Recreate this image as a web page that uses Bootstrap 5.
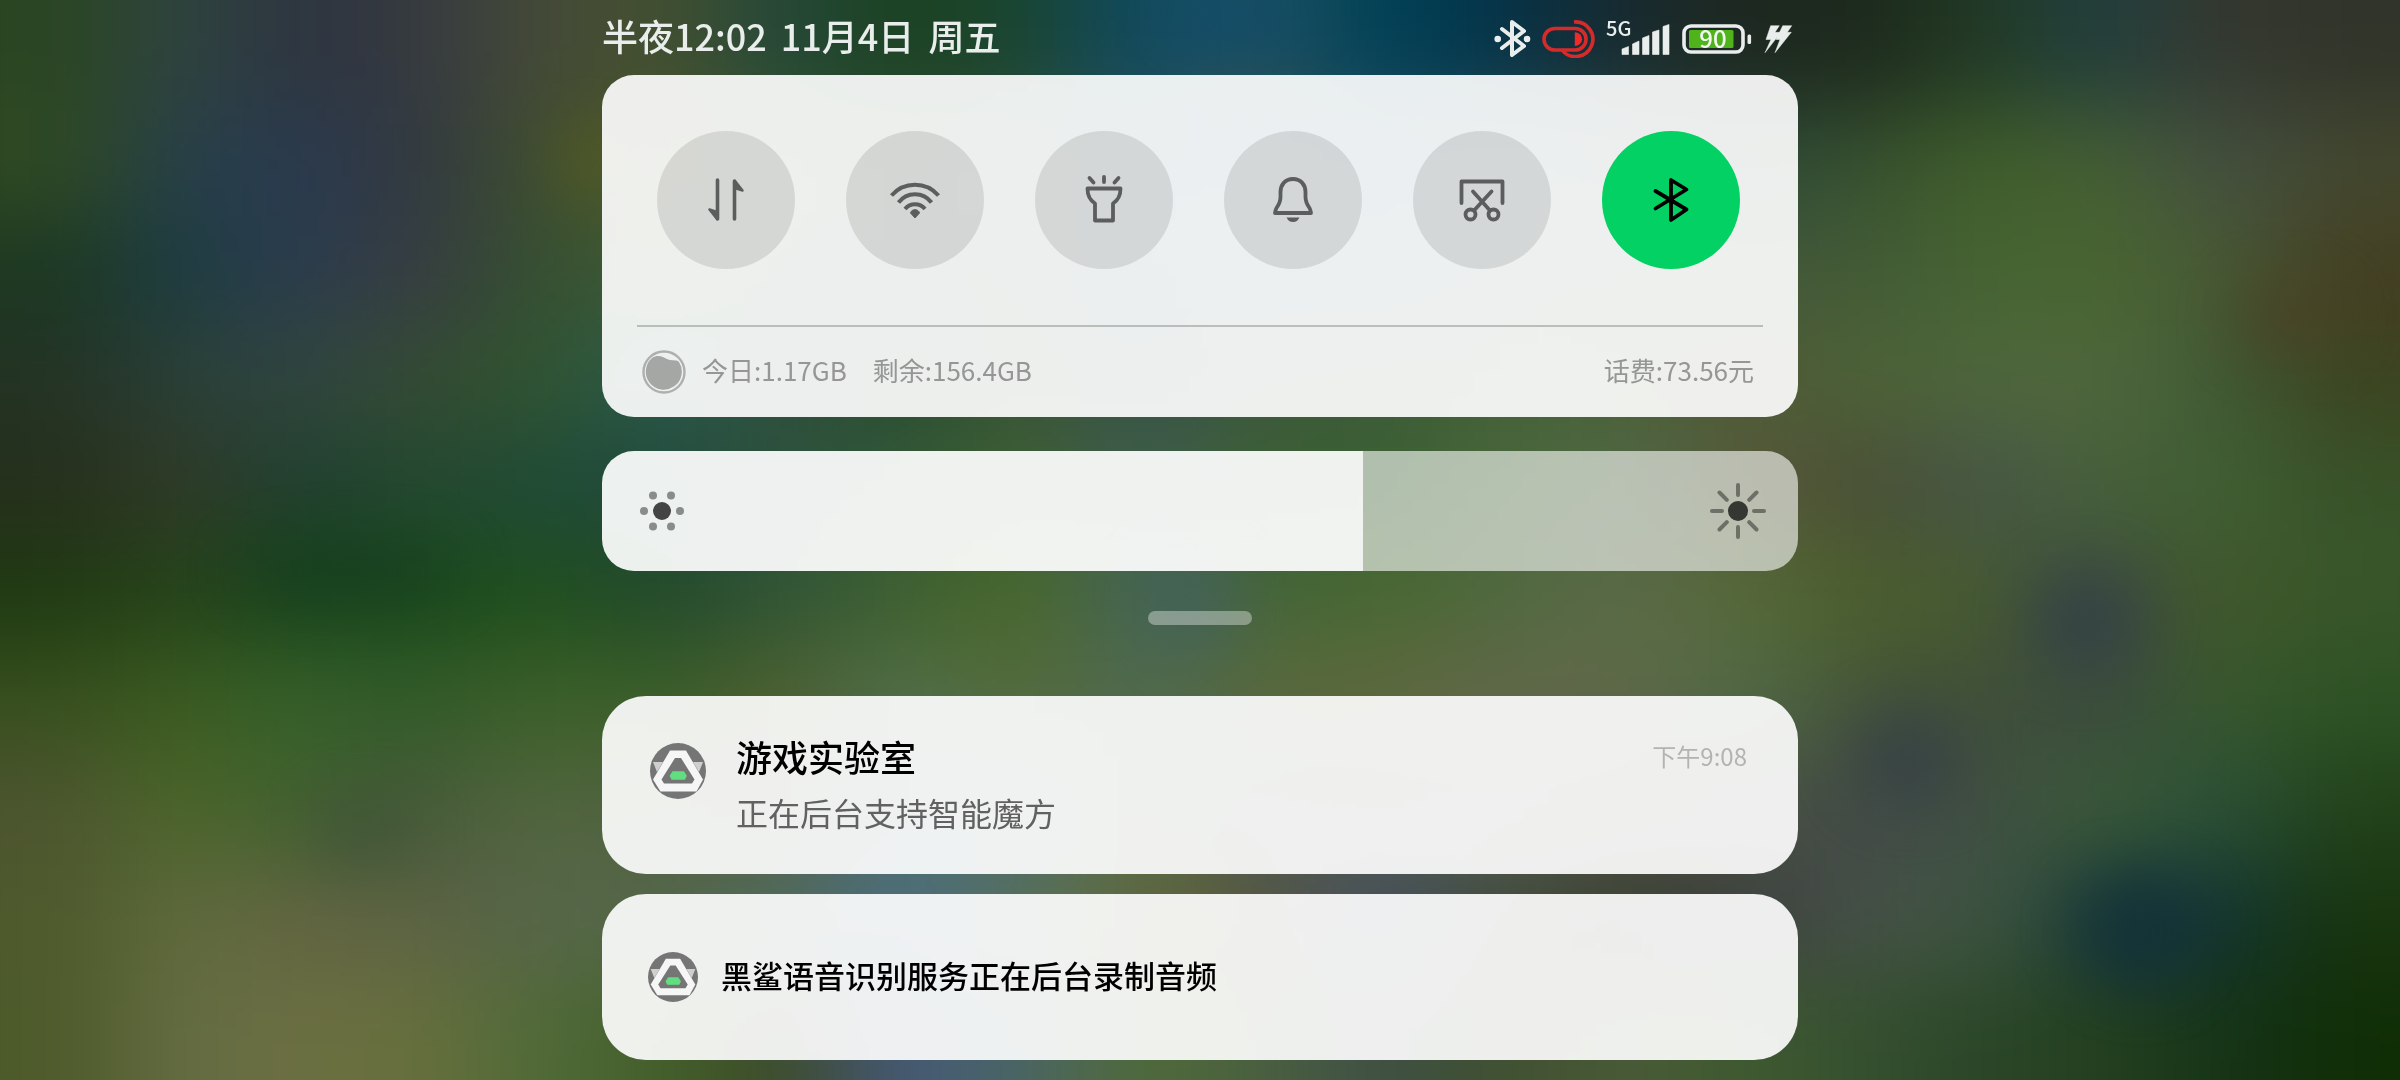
<!DOCTYPE html>
<html lang="zh-CN">
<head>
<meta charset="utf-8">
<meta name="viewport" content="width=device-width, initial-scale=1">
<title>通知中心</title>
<link href="https://cdn.jsdelivr.net/npm/bootstrap@5.3.0/dist/css/bootstrap.min.css" rel="stylesheet">
<style>
  body { font-family: "Noto Sans CJK SC", "Noto Sans", sans-serif; background: #35502f; color: #000; min-height: 100vh; }
  .wallpaper { position: fixed; inset: 0; width: 100%; height: 100%; z-index: -1; }
  .shade { max-width: 1196px; }
  .statusbar { height: 75px; color: #e9eeec; font-size: 36px; font-weight: 500; line-height: 48px; padding-right: 4px; }
  .status-gap { gap: 14px; padding-bottom: 6px; }
  .icon-gap { gap: 10px; }
  .panel { background: rgba(255, 255, 255, .91); border-radius: 32px; }
  .toggles { padding: 56px 58px 56px 55px; }
  .toggle { width: 138px; height: 138px; background: rgba(0, 0, 0, .1); color: #5c5d5d; }
  .toggle:hover { background: rgba(0, 0, 0, .15); }
  .toggle.is-on { background: #04d163; color: #000; }
  .rule-line { height: 2px; margin: 0 35px; background: #bbbdbb; }
  .usage { height: 90px; padding: 0 44px 0 40px; font-size: 26px; color: #959695; line-height: 36px; }
  .usage > span, .usage-left span > span, .usage-left > span:last-child { padding-bottom: 4px; }
  .usage-left { gap: 26px; }
  .usage-ball { gap: 16px; }
  .brightness { margin-top: 34px; }
  .brightness input { appearance: none; -webkit-appearance: none; height: 120px; border-radius: 32px; cursor: pointer;
    background: linear-gradient(to right, rgba(255,255,255,.92) var(--level), rgba(255,255,255,.6) var(--level)); }
  .brightness input::-webkit-slider-thumb { -webkit-appearance: none; width: 2px; height: 120px; background: transparent; }
  .brightness input::-moz-range-thumb { width: 2px; height: 120px; border: 0; background: transparent; }
  .brightness svg { top: 30px; pointer-events: none; }
  .sun-low { left: 30px; }
  .sun-high { right: 30px; }
  .grabber { width: 104px; height: 14px; margin: 40px auto 71px; border-radius: 7px; background: rgba(255, 255, 255, .36); }
  .notices { gap: 20px; padding-bottom: 20px; }
  .notice { background: rgba(255, 255, 255, .91); border-radius: 44px; }
  .notice-tall { padding: 36px 51px 40px 48px; gap: 30px; }
  .notice-tall .app-logo { width: 56px; margin-top: 11px; }
  .notice-tall h2 { font-size: 36px; line-height: 48px; font-weight: 500; margin: 0; }
  .notice-tall p { font-size: 32px; line-height: 44px; margin: 10px 0 0; color: #606160; }
  .notice-tall time { font-size: 24px; line-height: 48px; color: #b2b4b2; }
  .notice-short { padding: 58px 46px; gap: 23px; }
  .notice-short .app-logo { width: 50px; }
  .notice-short p { font-size: 31px; line-height: 46px; font-weight: 500; margin: 0; padding-bottom: 4px; }
</style>
<script src="https://cdn.jsdelivr.net/npm/bootstrap@5.3.0/dist/js/bootstrap.bundle.min.js"></script>
</head>
<body>
<svg class="wallpaper" viewBox="0 0 2400 1080" preserveAspectRatio="none" aria-hidden="true">
  <defs>
    <filter id="soft" x="-10%" y="-10%" width="120%" height="120%" color-interpolation-filters="sRGB"><feGaussianBlur stdDeviation="56 46"/></filter>
    <filter id="softer" x="-80%" y="-80%" width="260%" height="260%" color-interpolation-filters="sRGB"><feGaussianBlur stdDeviation="30"/></filter>
  </defs>
  <g id="mesh" filter="url(#soft)"></g>
  <g filter="url(#softer)" opacity=".75">
    <ellipse cx="2086" cy="620" rx="54" ry="50" fill="#323e48"/>
    <ellipse cx="1908" cy="756" rx="54" ry="48" fill="#343f46"/>
    <ellipse cx="2140" cy="930" rx="60" ry="56" fill="#10303a"/>
    <ellipse cx="2290" cy="318" rx="56" ry="34" fill="#4a4225"/>
    <ellipse cx="590" cy="160" rx="24" ry="34" fill="#5c601c"/>
    <ellipse cx="1190" cy="600" rx="40" ry="50" fill="#44615c"/>
    <ellipse cx="365" cy="830" rx="50" ry="30" fill="#3d5238"/>
    <ellipse cx="350" cy="570" rx="110" ry="24" fill="#123c1e"/>
    <ellipse cx="1240" cy="14" rx="70" ry="22" fill="#0c4c74"/>
  </g>
</svg>

<main class="shade w-100 mx-auto">
  <header class="statusbar d-flex justify-content-between align-items-center">
    <div class="d-flex status-gap"><span>半夜12:02</span><span>11月4日</span><span>周五</span></div>
    <div class="d-flex icon-gap align-items-center">
      <svg width="38" height="40" viewBox="0 0 38 40" role="img" aria-label="蓝牙已连接">
        <path d="M8 11 30 28 18 37V4L30 13 8 30" fill="none" stroke="currentColor" stroke-width="4" stroke-linejoin="round" stroke-linecap="round"/>
        <circle cx="3.7" cy="21" r="3.3" fill="currentColor"/><circle cx="33" cy="21" r="3.3" fill="currentColor"/>
      </svg>
      <svg width="54" height="40" viewBox="0 0 54 40" role="img" aria-label="游戏模式" fill="none" stroke="#d62b2b" stroke-width="3.6">
        <rect x="2" y="10.5" width="42" height="21.5" rx="10.7"/>
        <path d="M32 4A17.3 17.3 0 1 1 20 32"/>
        <path d="M32.8 14.3A7.2 6.8 0 0 1 32.8 28Z" fill="#f02a2a" stroke="none"/>
      </svg>
      <svg width="64" height="60" viewBox="0 -10 64 60" role="img" aria-label="5G 信号" fill="currentColor">
        <text x="0" y="18" font-size="20" font-weight="500">5G</text>
        <path d="M16 31 22.500 28.500V36.500H16ZM26.500 26 33 23V36.500H26.500ZM36.500 20 43 17.500V36.500H36.500ZM46.500 14 53 12V36.500H46.500ZM57 8.500 63 6.500V36.500H57Z" stroke="currentColor" stroke-width=".6" stroke-linejoin="round"/>
      </svg>
      <svg width="72" height="40" viewBox="0 0 72 40" role="img" aria-label="电量 90">
        <rect x="4" y="8" width="59" height="26" rx="7" fill="none" stroke="currentColor" stroke-width="3.6"/>
        <rect x="9" y="12" width="44.500" height="18" rx="1.500" fill="#4fb31c"/>
        <rect x="67.500" y="16.500" width="3.600" height="9.500" rx="1.500" fill="currentColor"/>
        <text x="33" y="30" text-anchor="middle" font-size="24" font-weight="500" fill="#f4f8f2">90</text>
      </svg>
      <svg width="32" height="40" viewBox="0 0 32 40" role="img" aria-label="快速充电" fill="currentColor">
        <path d="M8.700 7.700H17.300L13 14.300H19L3 34.700 9 21.500H4ZM20.700 7.700H29.700L25.300 14.300H29.300L13 34.700 18 21.500H14Z" stroke="currentColor" stroke-width=".5"/>
      </svg>
    </div>
  </header>

  <section class="panel">
    <div class="toggles d-flex justify-content-between">
      <button type="button" class="toggle btn border-0 p-0 rounded-circle" aria-label="移动数据">
        <svg width="60" height="60" viewBox="0 0 60 60" fill="currentColor" stroke="currentColor" stroke-linecap="round" stroke-linejoin="round">
          <path d="M21.500 10V49M38.500 11V49" stroke-width="3.600"/><path d="M21 49 13.500 39.500 21 42ZM39 11 46.500 20.500 39 18Z" stroke-width="2.500"/></svg>
      </button>
      <button type="button" class="toggle btn border-0 p-0 rounded-circle" aria-label="无线网络">
        <svg width="60" height="60" viewBox="0 0 60 60" fill="none" stroke="currentColor" stroke-width="4">
          <path d="M6.500 25.500A31 31 0 0 1 53.500 25.500M13.500 32.500A20.500 20.500 0 0 1 46.500 32.500M20 39A13 13 0 0 1 40 39"/>
          <path d="M25.500 43C26.500 38.500 33.500 38.500 34.500 43L30 48Z" fill="currentColor" stroke-width="1" stroke-linejoin="round"/></svg>
      </button>
      <button type="button" class="toggle btn border-0 p-0 rounded-circle" aria-label="手电筒">
        <svg width="60" height="60" viewBox="0 0 60 60" fill="none" stroke="currentColor" stroke-width="3.800" stroke-linecap="round" stroke-linejoin="round">
          <path d="M13.500 18.500H46.500C46.500 27 43.500 30.500 39 33.500V50.500H21V33.500C16.500 30.500 13.500 27 13.500 18.500ZM30 7V12M15.500 8 19.500 12.500M44.500 8 40.500 12.500"/></svg>
      </button>
      <button type="button" class="toggle btn border-0 p-0 rounded-circle" aria-label="铃声">
        <svg width="60" height="60" viewBox="0 0 60 60" fill="none" stroke="currentColor" stroke-width="3.800" stroke-linejoin="round">
          <path d="M30 9C22 9 17.500 15 17.500 22V27C17.500 32 16 34.500 13.500 38 12.500 40 12 41.500 12 43H48C48 41.500 47.500 40 46.500 38 44 34.500 42.500 32 42.500 27V22C42.500 15 38 9 30 9Z"/>
          <path d="M23.500 47.500H36.500C35 50.500 33 52 30 52S25 50.500 23.500 47.500Z" fill="currentColor" stroke="none"/></svg>
      </button>
      <button type="button" class="toggle btn border-0 p-0 rounded-circle" aria-label="截屏">
        <svg width="60" height="60" viewBox="0 0 60 60" fill="none" stroke="currentColor" stroke-width="3.800" stroke-linecap="round" stroke-linejoin="round">
          <path d="M9.500 33V11.500H50.500V33M21 21.500 37.500 40M39.500 21.500 22.500 40"/><circle cx="18.500" cy="44.500" r="5"/><circle cx="41.500" cy="44.500" r="5"/></svg>
      </button>
      <button type="button" class="toggle is-on btn border-0 p-0 rounded-circle" aria-label="蓝牙" aria-pressed="true">
        <svg width="60" height="60" viewBox="0 0 60 60" fill="none" stroke="currentColor" stroke-width="3.800" stroke-linecap="round" stroke-linejoin="round">
          <path d="M14.500 21 45.500 39.500 30 50V10L45.500 19.500 14.500 38.500"/></svg>
      </button>
    </div>
    <div class="rule-line"></div>
    <div class="usage d-flex justify-content-between align-items-center">
      <div class="usage-left d-flex align-items-center">
        <span class="usage-ball d-flex align-items-center">
          <svg width="44" height="44" viewBox="0 0 44 44" aria-hidden="true">
            <circle cx="22" cy="22" r="20.500" fill="none" stroke="#aeb0ae" stroke-width="2.400"/>
            <path d="M10 8C16 4 21 7 25 9 30 11.500 34 9 37 12A18 18 0 1 1 10 8Z" fill="#a5a7a5"/></svg>
          <span>今日:1.17GB</span>
        </span>
        <span>剩余:156.4GB</span>
      </div>
      <span>话费:73.56元</span>
    </div>
  </section>

  <section class="brightness position-relative">
    <input id="level" class="w-100 d-block" type="range" min="0" max="1000" value="636" aria-label="屏幕亮度" style="--level:63.6%">
    <svg class="sun-low position-absolute" width="60" height="60" viewBox="0 0 60 60" aria-hidden="true">
      <circle cx="30" cy="30" r="9" fill="#444"/>
      <g fill="#8a8c8b"><circle cx="12" cy="30" r="4"/><circle cx="48" cy="30" r="4"/><circle cx="21" cy="14.500" r="4"/><circle cx="39" cy="14.500" r="4"/><circle cx="21" cy="45.500" r="4"/><circle cx="39" cy="45.500" r="4"/></g>
    </svg>
    <svg class="sun-high position-absolute" width="60" height="60" viewBox="0 0 60 60" aria-hidden="true">
      <circle cx="30" cy="30" r="10" fill="#353832"/>
      <path d="M30 4V14M30 46V56M4 30H14M46 30H56M11.500 11.500 18.800 18.800M41.200 41.200 48.500 48.500M48.500 11.500 41.200 18.800M18.800 41.200 11.500 48.500" stroke="#6c7066" stroke-width="4" stroke-linecap="round"/>
    </svg>
  </section>

  <div class="grabber"></div>

  <section class="notices d-flex flex-column">
    <article class="notice notice-tall d-flex align-items-start">
      <svg class="app-logo flex-shrink-0" viewBox="0 0 56 56" aria-hidden="true">
        <defs><g id="shark">
          <circle cx="28" cy="28" r="28" fill="#757575"/>
          <path d="M3 19H13L7 29ZM53 19H43L49 29Z" fill="#cfcfcf"/>
          <path d="M20 7.500H36L53 36.500 46.500 48.500H10.500L3 36.500Z" fill="#f6f6f6"/>
          <path d="M25 15H31L44.500 36.500 42 40.500H14L11.500 36.500Z" fill="#757575"/>
          <path d="M23 29H33.500L36 33 34.500 36H22L20.500 33Z" fill="#62dd80" stroke="#62dd80" stroke-width="1.500" stroke-linejoin="round"/>
        </g></defs>
        <use href="#shark"/>
      </svg>
      <div class="flex-grow-1">
        <h2>游戏实验室</h2>
        <p>正在后台支持智能魔方</p>
      </div>
      <time datetime="21:08">下午9:08</time>
    </article>
    <article class="notice notice-short d-flex align-items-center">
      <svg class="app-logo flex-shrink-0" viewBox="0 0 56 56" aria-hidden="true"><use href="#shark"/></svg>
      <p>黑鲨语音识别服务正在后台录制音频</p>
    </article>
  </section>
</main>

<script>
  // Wallpaper colours, 20 columns by 10 rows; the blur melts them together.
  const rows = [
    '2a4522 2f4440 2d3440 363a40 454a38 44502f 24483a 1c4220 1a4530 104a62 20505c 004258 053348 182a30 1e2820 1c281c 223a24 213f3f 35382f 30342a',
    '2f4a22 263f4a 2a3a50 32383f 3f4f30 50582a 3a5a30 355038 3a5545 2a5560 3a5560 2a5068 355a60 355548 2a4a3a 37502f 3f5e2a 455f33 434f42 43482f',
    '1c3822 1d3c42 2b3c4e 373c42 355030 405a35 355535 305040 3a5040 305565 355a68 38586a 3a6055 405a40 45583a 425a36 456433 486530 485a36 443f22',
    '243324 2a4038 304540 354b32 30552f 2a5a50 30503a 2a4a30 3a5535 355048 40583f 3a5a35 44603a 4a6238 505a38 4c6236 4e663c 50673c 3f5a35 3c4420',
    '262f1c 303a26 1f4030 23482f 1f4a38 204a3a 2d5040 305a38 3f6030 3f5f50 3a6030 3a6035 4a6838 506848 56583a 4a4e35 465648 46603a 405f33 385228',
    '1f3a12 26441a 1a451c 1b4a1c 20501c 22482a 305535 3f6030 486829 456558 44653a 486830 50683f 5a6a48 566a38 4b5f2c 465a30 3d4e40 42582a 38562a',
    '38501e 3b5c20 35602a 325a28 3d602a 3a6028 50602f 50704a 566a3a 4f6a50 5a6a3c 5f683e 626a4a 606848 506a48 455538 3f5038 3b4a3e 38582e 2d5224',
    '4d5530 4c662a 41602f 475a3a 52663e 4f6040 585a45 4f6a70 50706a 556a4a 505a50 4f5848 556050 505048 485040 424a48 404f44 3a5a36 2a5038 22421a',
    '4e5a2c 5f6b3c 626442 5c6244 56664a 56684a 4f7060 4a6e85 55705a 646a38 555540 455068 404a3a 3a4030 3c3e40 465048 3f5640 1c3c3a 123434 18350f',
    '4d5a2a 646c42 6c6f42 666f3c 4f6a38 44602a 3c4a28 45587a 4a6565 506a38 4a6040 3f4f45 3f5030 4a5a38 3f5a30 35502f 2a4628 24401f 163418 102e06'
  ].map(r => r.split(' '));
  const mesh = document.getElementById('mesh');
  for (let j = -1; j <= 10; j++) for (let i = -1; i <= 20; i++) {
    const cell = document.createElementNS('http://www.w3.org/2000/svg', 'rect');
    const c = rows[Math.min(9, Math.max(0, j))][Math.min(19, Math.max(0, i))];
    cell.setAttribute('x', i * 120); cell.setAttribute('y', j * 108);
    cell.setAttribute('width', 121); cell.setAttribute('height', 109);
    cell.setAttribute('fill', '#' + c);
    mesh.appendChild(cell);
  }
  const level = document.getElementById('level');
  level.addEventListener('input', () => level.style.setProperty('--level', level.value / 10 + '%'));
</script>
</body>
</html>
